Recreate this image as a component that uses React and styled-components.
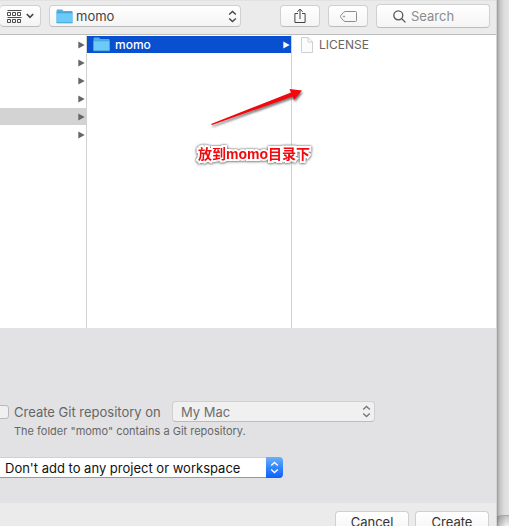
import React from "react";
import styled, { createGlobalStyle, css } from "styled-components";

const GlobalStyle = createGlobalStyle`
  * { box-sizing: border-box; }
  html, body, #root { height: 100%; }
  body {
    margin: 0;
    overflow: hidden;
    background: #f6f6f6;
    color: #444;
    font: 13px/18px Inter, "Noto Sans CJK SC", sans-serif;
  }
  button, input, select { margin: 0; font: inherit; color: inherit; }
`;

const Page = styled.div`
  display: grid;
  grid-template-columns: minmax(0, 1fr) 12px;
  height: 100vh;
  overflow: hidden;
`;

const Dialog = styled.main`
  position: relative;
  display: flex;
  flex-direction: column;
  min-width: 0;
  overflow: hidden;
  background: #ebebeb;
  border-right: 1px solid #d4d4d4;
`;

const Backdrop = styled.div`
  display: flex;
  flex-direction: column;
  &::before {
    content: "";
    flex: 1;
    border-bottom: 1px solid #a8a8a8;
    background: linear-gradient(90deg, #999, #bdbdbd 2px, #d2d2d2 5px, #dfdfdf 8px, #e3e3e3);
  }
  &::after {
    content: "";
    height: 10px;
    background:
      linear-gradient(90deg, #0006, #0003 2px, transparent 9px),
      linear-gradient(#c4c4c4, #f0f0f0);
  }
`;

const Toolbar = styled.header`
  display: flex;
  flex: none;
  align-items: center;
  justify-content: space-between;
  height: 35px;
  padding: 0 6px 3px 0;
  background: #ebebeb;
  border-top: 1px solid #e2e2e2;
  border-bottom: 1px solid #bdbdbd;
`;

const ToolGroup = styled.div`
  display: flex;
  align-items: center;
  gap: 8px;
`;

const control = css`
  border: 1px solid #d0d0d0;
  border-bottom-color: #bcbcbc;
  border-radius: 4px;
  background: linear-gradient(#fff, #f4f4f4);
`;

const ToolButton = styled.button`
  ${control}
  display: flex;
  align-items: center;
  justify-content: center;
  gap: 4px;
  width: 40px;
  height: 22px;
  padding: 0;
`;

const ViewButton = styled(ToolButton)`
  width: 41px;
  border-left: 0;
`;

const SelectWrap = styled.div`
  position: relative;
  width: ${(p) => p.$width}px;
`;

const Select = styled.select`
  ${control}
  display: block;
  width: 100%;
  height: 22px;
  padding: 0 24px 0 26px;
  appearance: none;
  outline: 0;
`;

const MacSelect = styled(Select)`
  height: 21px;
  padding-left: 8px;
  color: #6e6e6e;
  background: #f0f0f0;
  opacity: 1;
`;

const ProjectSelect = styled(Select)`
  height: 21px;
  padding-left: 5px;
  color: #111;
  background: #fff;
  border-left: 0;
  border-radius: 0 4px 4px 0;
  border-bottom-color: #999;
`;

const SelectIcon = styled.span`
  position: absolute;
  top: 0;
  bottom: 0;
  left: ${(p) => (p.$start ? "7px" : "auto")};
  right: ${(p) => (p.$start ? "auto" : "4px")};
  display: flex;
  align-items: center;
  pointer-events: none;
`;

const BlueCap = styled(SelectIcon)`
  right: 0;
  justify-content: center;
  width: 17px;
  border-radius: 0 4px 4px 0;
  background: linear-gradient(#6bb0fb, #3486fc 50%, #0c61fb);
`;

const SearchBox = styled.label`
  ${control}
  display: flex;
  align-items: center;
  gap: 5px;
  width: 114px;
  height: 24px;
  padding: 0 8px 0 16px;
`;

const SearchInput = styled.input`
  flex: 1;
  min-width: 0;
  padding: 0;
  border: 0;
  outline: 0;
  background: transparent;
  &::placeholder { color: #8c8c8c; opacity: 1; }
`;

const Browser = styled.section`
  display: grid;
  flex: none;
  grid-template-columns: 87px 205px minmax(0, 1fr);
  height: 293px;
  background: #fff;
`;

const Column = styled.ul`
  margin: 0;
  padding: 1px 0 0;
  list-style: none;
  border-right: ${(p) => (p.$last ? 0 : 1)}px solid #d2d2d2;
`;

const Row = styled.li`
  display: flex;
  align-items: center;
  gap: 5px;
  height: 17px;
  margin-bottom: 1px;
  padding: 0 1px 0 ${(p) => p.$inset || 6}px;
  color: ${(p) => (p.$selected ? "#fff" : "#666")};
  background: ${(p) => (p.$selected ? "#0850d0" : p.$active ? "#d3d3d3" : "transparent")};
  font-size: 12px;
  font-weight: ${(p) => (p.$selected ? 500 : 400)};
  & > :last-child:not(span) { margin-left: auto; }
`;

const Options = styled.section`
  display: flex;
  flex: none;
  flex-direction: column;
  align-items: flex-start;
  height: 175px;
  padding-top: 73px;
  background: #e2e2e4;
`;

const GitLine = styled.div`
  display: flex;
  align-items: center;
  gap: 13px;
`;

const GitLabel = styled.label`
  display: flex;
  align-items: center;
  gap: 5px;
  width: 159px;
  color: #666;
  white-space: nowrap;
`;

const Check = styled.input`
  flex: none;
  width: 14px;
  height: 14px;
  margin: 0 0 0 -5px;
  appearance: none;
  border: 1px solid #b8b8b8;
  border-radius: 3px;
  background: #f0f0f0;
`;

const Note = styled.p`
  margin: 0 0 17px;
  padding-left: 14px;
  color: #666;
  font-size: 11px;
`;

const Footer = styled.footer`
  display: flex;
  flex: none;
  justify-content: flex-end;
  gap: 6px;
  padding: 8px 7px 12px;
`;

const ActionButton = styled.button`
  ${control}
  width: 74px;
  height: 22px;
  padding: 0;
  color: #333;
`;

const Pointer = styled.svg`
  position: absolute;
  left: 208px;
  top: 86px;
  overflow: visible;
  filter: drop-shadow(1px 2px 1px #0008);
`;

const Callout = styled.strong`
  position: absolute;
  left: 198px;
  top: 144px;
  color: #f3090d;
  font: bold 14px/20px "Liberation Sans", "Noto Sans CJK SC", sans-serif;
  white-space: nowrap;
  paint-order: stroke fill;
  -webkit-text-stroke: 4px #fff;
  filter: drop-shadow(0 0 1px #555) drop-shadow(0 1px 1px #8888);
`;

const Folder = () => (
  <svg width="17" height="15" viewBox="0 0 16 14" aria-hidden="true">
    <path d="M.5 1.5q0-1 1-1h4.2l1.2 1.4h8q.6 0 .6.6V13H.5z" fill="#51aede" />
    <path d="M.5 3.5h15v9.2H.5z" fill="#6bcaf8" />
    <path d="M.5 3.5h15M.5 13h15" stroke="#3f9bd2" strokeWidth=".7" />
  </svg>
);

const Triangle = ({ color = "#666" }) => (
  <svg width="7" height="8" viewBox="0 0 7 8" aria-hidden="true">
    <path d="M.3.4 6.7 4 .3 7.6z" fill={color} />
  </svg>
);

const UpDown = ({ color = "#444" }) => (
  <svg width="9" height="13" viewBox="0 0 9 13" fill="none" stroke={color} strokeWidth="1.4" aria-hidden="true">
    <path d="M1.2 4.4 4.5 1.4l3.3 3M1.2 8.6l3.3 3 3.3-3" />
  </svg>
);

const GridIcon = () => (
  <svg width="15" height="13" viewBox="0 0 15 13" fill="none" stroke="#4b4b4b" aria-hidden="true">
    <path d="M.5.5h14M.5 2.5h3v3h-3zM5.5 2.5h3v3h-3zM10.5 2.5h3v3h-3zM.5 7.5h14M.5 9.5h3v3h-3zM5.5 9.5h3v3h-3zM10.5 9.5h3v3h-3z" />
  </svg>
);

const DownIcon = () => (
  <svg width="8" height="6" viewBox="0 0 8 6" fill="none" stroke="#444" strokeWidth="1.6" aria-hidden="true">
    <path d="m.8 1 3.2 3.4L7.2 1" />
  </svg>
);

const ShareIcon = () => (
  <svg width="12" height="16" viewBox="0 0 12 16" fill="none" stroke="#444" aria-hidden="true">
    <path d="M4 5.5H.9v9h10.2v-9H8M6 11V1.2M3.3 3.8 6 1.1l2.7 2.7" />
  </svg>
);

const TagIcon = () => (
  <svg width="17" height="11" viewBox="0 0 17 11" fill="none" stroke="#8c8c8c" aria-hidden="true">
    <path d="M5 .5h10.5q1 0 1 1v8q0 1-1 1H5Q3.8 10.5.7 6.3q-.5-.8 0-1.6Q3.8.5 5 .5z" />
    <circle cx="4" cy="5.5" r=".6" />
  </svg>
);

const SearchIcon = () => (
  <svg width="13" height="13" viewBox="0 0 13 13" fill="none" stroke="#555" strokeWidth="1.3" aria-hidden="true">
    <circle cx="5.3" cy="5.3" r="4.5" />
    <path d="m8.5 8.5 3.9 3.9" />
  </svg>
);

const FileIcon = () => (
  <svg width="14" height="16" viewBox="0 0 14 16" fill="#fcfcfc" stroke="#cfcfcf" aria-hidden="true">
    <path d="M1.5.5H8L12.5 5v10.5h-11zM8 .5V5h4.5" />
  </svg>
);

export default function App() {
  return (
    <>
      <GlobalStyle />
      <Page>
        <Dialog>
          <Toolbar>
            <ToolGroup>
              <ViewButton aria-label="Group items">
                <GridIcon />
                <DownIcon />
              </ViewButton>
              <SelectWrap $width={192}>
                <Select aria-label="Location">
                  <option>momo</option>
                </Select>
                <SelectIcon $start><Folder /></SelectIcon>
                <SelectIcon><UpDown /></SelectIcon>
              </SelectWrap>
            </ToolGroup>
            <ToolGroup>
              <ToolButton aria-label="Share"><ShareIcon /></ToolButton>
              <ToolButton aria-label="Edit tags"><TagIcon /></ToolButton>
              <SearchBox>
                <SearchIcon />
                <SearchInput aria-label="Search" placeholder="Search" />
              </SearchBox>
            </ToolGroup>
          </Toolbar>

          <Browser>
            <Column>
              {[0, 1, 2, 3, 4, 5].map((n) => (
                <Row key={n} $active={n === 4}><Triangle /></Row>
              ))}
            </Column>
            <Column>
              <Row $selected>
                <Folder />
                <span>momo</span>
                <Triangle color="#fff" />
              </Row>
            </Column>
            <Column $last>
              <Row $inset={8}>
                <FileIcon />
                <span>LICENSE</span>
              </Row>
            </Column>
          </Browser>

          <Options>
            <GitLine>
              <GitLabel>
                <Check type="checkbox" disabled />
                Create Git repository on
              </GitLabel>
              <SelectWrap $width={203}>
                <MacSelect aria-label="Repository location" disabled>
                  <option>My Mac</option>
                </MacSelect>
                <SelectIcon><UpDown color="#777" /></SelectIcon>
              </SelectWrap>
            </GitLine>
            <Note>The folder "momo" contains a Git repository.</Note>
            <SelectWrap $width={283}>
              <ProjectSelect aria-label="Add to">
                <option>Don't add to any project or workspace</option>
              </ProjectSelect>
              <BlueCap><UpDown color="#fff" /></BlueCap>
            </SelectWrap>
          </Options>

          <Footer>
            <ActionButton>Cancel</ActionButton>
            <ActionButton>Create</ActionButton>
          </Footer>

          <Pointer width="94" height="40" viewBox="0 0 94 40" aria-hidden="true">
            <path d="M3 38 83 6.5 81.5 3 94 4.5 86 14 84.5 10.5 4 39z" fill="#f3090d" />
          </Pointer>
          <Callout>放到momo目录下</Callout>
        </Dialog>
        <Backdrop />
      </Page>
    </>
  );
}
